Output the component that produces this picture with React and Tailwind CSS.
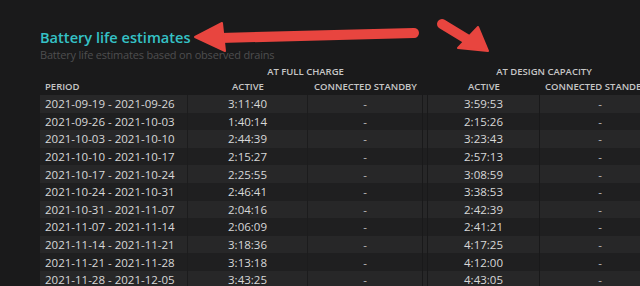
import React from 'react';

const rows = [
    ["2021-09-19 - 2021-09-26", "3:11:40", "3:59:53"],
    ["2021-09-26 - 2021-10-03", "1:40:14", "2:15:26"],
    ["2021-10-03 - 2021-10-10", "2:44:39", "3:23:43"],
    ["2021-10-10 - 2021-10-17", "2:15:27", "2:57:13"],
    ["2021-10-17 - 2021-10-24", "2:25:55", "3:08:59"],
    ["2021-10-24 - 2021-10-31", "2:46:41", "3:38:53"],
    ["2021-10-31 - 2021-11-07", "2:04:16", "2:42:39"],
    ["2021-11-07 - 2021-11-14", "2:06:09", "2:41:21"],
    ["2021-11-14 - 2021-11-21", "3:18:36", "4:17:25"],
    ["2021-11-21 - 2021-11-28", "3:13:18", "4:12:00"],
    ["2021-11-28 - 2021-12-05", "3:43:25", "4:43:05"],
];

const cols = "grid grid-cols-[148px_120px_115px_5px_112px_120px]";

export default function App() {
    return (
        <div
            className="relative w-[640px] h-[286px] overflow-hidden bg-[#1a1a1b] pl-[40px] pt-[28px]"
            style={{ fontFamily: '"Open Sans", "Noto Sans", sans-serif' }}
        >
            <h2 className="text-[14.6px] leading-[19px] font-semibold text-[#35c2c6]">
                Battery life estimates
            </h2>
            <p className="text-[11px] leading-[14px] text-[#4e4e4f] mt-[1px] tracking-[-0.2px]">
                Battery life estimates based on observed drains
            </p>

            <div className="w-[620px] mt-[2px] text-[#d8d8d8]">
                {/* group headers */}
                <div className={`${cols} h-[16px] items-center text-[9.5px] font-semibold text-[#c6c6c6]`}>
                    <div />
                    <div className="col-span-2 text-center">AT FULL CHARGE</div>
                    <div />
                    <div className="col-span-2 text-center">AT DESIGN CAPACITY</div>
                </div>
                {/* column headers */}
                <div className={`${cols} h-[15px] items-center text-[9.5px] font-semibold text-[#c6c6c6]`}>
                    <div className="pl-[5px]">PERIOD</div>
                    <div className="text-center">ACTIVE</div>
                    <div className="text-center">CONNECTED STANDBY</div>
                    <div />
                    <div className="text-center">ACTIVE</div>
                    <div className="text-left pl-[5px] whitespace-nowrap">CONNECTED STANDBY</div>
                </div>

                {rows.map((r, i) => (
                    <div
                        key={i}
                        className={`${cols} h-[17.6px] items-stretch text-[11.5px] ${i % 2 === 0 ? 'bg-[#272728]' : 'bg-[#1f1f20]'}`}
                    >
                        <div className="pl-[5px] flex items-center border-r border-[#1c1c1d]">{r[0]}</div>
                        <div className="flex items-center justify-center border-r border-[#1c1c1d]">{r[1]}</div>
                        <div className="flex items-center justify-center border-r border-[#19191a] text-[#bdbdbd]">-</div>
                        <div className="border-r border-[#19191a]" />
                        <div className="flex items-center justify-center border-r border-[#19191a]">{r[2]}</div>
                        <div className="flex items-center justify-center text-[#bdbdbd]">-</div>
                    </div>
                ))}
            </div>

            {/* annotation arrows */}
            <svg className="absolute inset-0 pointer-events-none" width="640" height="286" viewBox="0 0 640 286">
                <path d="M220 38 L414 33" stroke="#e8453f" strokeWidth="10" strokeLinecap="round" fill="none" />
                <path d="M195 37 L222 23 L225 51 Z" fill="#e8453f" stroke="#e8453f" strokeWidth="2" strokeLinejoin="round" />
                <path d="M442 24 L470 41" stroke="#e8453f" strokeWidth="10" strokeLinecap="round" fill="none" />
                <path d="M458 48 L488 51 L478 27 Z" fill="#e8453f" stroke="#e8453f" strokeWidth="2" strokeLinejoin="round" />
            </svg>
        </div>
    );
}
